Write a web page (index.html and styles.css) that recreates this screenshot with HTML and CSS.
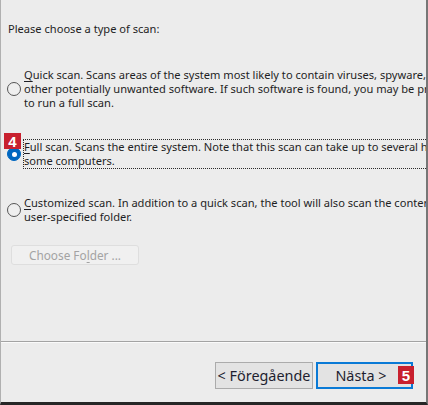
FILE: index.html
```html
<!DOCTYPE html>
<html lang="en">
<head>
<meta charset="utf-8">
<title>Scan type</title>
<link rel="stylesheet" href="styles.css">
</head>
<body>
<div class="window">
  <div class="content">
    <p class="intro">Please choose a type of scan:</p>

    <div class="option option-quick">
      <span class="radio"></span>
      <span class="label"><u>Q</u>uick scan. Scans areas of the system most likely to contain viruses, spyware, and<br>other potentially unwanted software. If such software is found, you may be prompted<br>to run a full scan.</span>
    </div>

    <div class="option option-full">
      <span class="badge badge-4">4</span>
      <span class="radio checked"></span>
      <span class="label focused"><u>F</u>ull scan. Scans the entire system. Note that this scan can take up to several hours on<br>some computers.</span>
    </div>

    <div class="option option-custom">
      <span class="radio"></span>
      <span class="label"><u>C</u>ustomized scan. In addition to a quick scan, the tool will also scan the contents of a<br>user-specified folder.</span>
    </div>

    <button class="folder-btn" disabled>Choose Fo<u>l</u>der ...</button>
  </div>

  <div class="footer">
    <button class="btn">&lt; Föregående</button>
    <button class="btn btn-default">Nästa &gt;<span class="badge badge-5">5</span></button>
  </div>
</div>
</body>
</html>
```

FILE: styles.css
```css
* {
  box-sizing: border-box;
}

html, body {
  margin: 0;
  padding: 0;
  background: #ececec;
}

.window {
  width: 428px;
  height: 405px;
  display: flex;
  flex-direction: column;
  background: #ececec;
  border-left: 1px solid #b0b0b0;
  border-right: 2px solid #767676;
  border-bottom: 3px solid #262626;
  overflow: hidden;
  font-family: "Noto Sans", "Open Sans", sans-serif;
  font-size: 11.1px;
  line-height: 14px;
  color: #1e1e24;
}

.content {
  flex: 1;
  padding: 22px 0 0 6px;
  display: flex;
  flex-direction: column;
  align-items: flex-start;
}

.intro {
  margin: 0 0 31px 1px;
  white-space: nowrap;
}

.option {
  position: relative;
  display: flex;
  align-items: center;
  white-space: nowrap;
}

.option-quick {
  margin-bottom: 28px;
}

.option-full {
  margin-bottom: 26px;
}

.option-custom {
  margin-bottom: 20px;
}

.radio {
  width: 14px;
  height: 14px;
  flex: none;
  border-radius: 50%;
  border: 1px solid #555555;
  background: #efefef;
  margin-right: 2px;
  position: relative;
}

.radio.checked {
  background: #0067c0;
  border-color: #0067c0;
}

.radio.checked::after {
  content: "";
  position: absolute;
  left: 3.5px;
  top: 3.5px;
  width: 5px;
  height: 5px;
  border-radius: 50%;
  background: #ffffff;
}

.label {
  border: 1px dotted transparent;
  padding: 0 1px 0 0;
}

.label.focused {
  border-color: #2a2a2a;
}

u {
  text-decoration: underline;
  text-underline-offset: 2px;
}

.folder-btn {
  margin-left: 4px;
  width: 128px;
  height: 20px;
  padding: 0;
  background: #f0f0f0;
  border: 1px solid #dedede;
  border-radius: 3px;
  font-family: inherit;
  font-size: 11.8px;
  color: #a3a3a3;
  text-align: center;
}

.footer {
  flex: none;
  height: 61px;
  border-top: 1px solid #a3a3a3;
  box-shadow: inset 0 1px 0 #fafafa;
  display: flex;
  justify-content: flex-end;
  align-items: flex-start;
  gap: 3px;
  padding: 20px 13px 0 0;
}

.btn {
  position: relative;
  width: 98px;
  height: 27px;
  padding: 0;
  background: #e3e3e3;
  border: 1px solid #ababab;
  font-family: inherit;
  font-size: 14.4px;
  color: #1e1e30;
  text-align: center;
  white-space: nowrap;
}

.btn-default {
  width: 97px;
  border: 2px solid #0a7ad6;
  padding-right: 7px;
}

.badge {
  position: absolute;
  background: #c8202e;
  color: #ffffff;
  font-family: "Liberation Sans", Arial, sans-serif;
  font-weight: bold;
  font-size: 15px;
  line-height: 1;
  display: flex;
  align-items: center;
  justify-content: center;
  z-index: 2;
}

.badge-4 {
  left: -3px;
  top: -6px;
  width: 17px;
  height: 16px;
}

.badge-5 {
  right: -3px;
  top: 2px;
  width: 16px;
  height: 18px;
}
```
